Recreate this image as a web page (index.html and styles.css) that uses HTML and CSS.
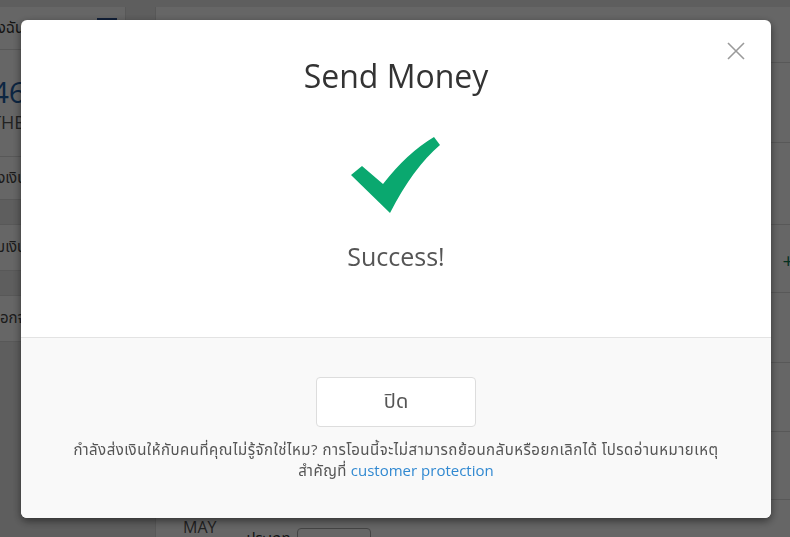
FILE: index.html
```html
<!DOCTYPE html>
<html lang="th">
<head>
<meta charset="utf-8">
<title>Send Money</title>
<link rel="stylesheet" href="styles.css">
</head>
<body>
<div class="page">
  <aside class="side">
    <div class="side-row side-head"><span class="side-title">บัญชีของฉัน</span><span class="side-icon"></span></div>
    <div class="side-balance">
      <div class="amount">12,346</div>
      <div class="currency">THB</div>
    </div>
    <div class="side-row">ส่งเงิน</div>
    <div class="side-gap"></div>
    <div class="side-row">รับเงิน</div>
    <div class="side-gap"></div>
    <div class="side-row">ถอนเงินออกจากบัญชี</div>
  </aside>
  <main class="main">
    <div class="main-row r1"></div>
    <div class="main-row r2"></div>
    <div class="main-row r3"></div>
    <div class="main-row r4"><span class="plus">+</span></div>
    <div class="main-row r5"></div>
    <div class="main-row r6"></div>
    <div class="main-row r7"></div>
    <div class="main-row r8">
      <div class="date">MAY</div>
      <div class="type">ประเภท <span class="select"></span></div>
    </div>
  </main>
</div>

<div class="overlay"></div>

<div class="modal" role="dialog">
  <button class="close" aria-label="Close">
    <svg width="18" height="18" viewBox="0 0 18 18"><path d="M1 1 L17 17 M17 1 L1 17" stroke="#9a9a9a" stroke-width="1.6" fill="none"/></svg>
  </button>
  <div class="modal-body">
    <h1 class="title">Send Money</h1>
    <svg class="check" width="92" height="80" viewBox="0 0 92 80">
      <path d="M1 39 L12 30 L33 48 Q57 17 84 1 L90 9 Q63 32 40 77 Z" fill="#0aa86f"/>
    </svg>
    <p class="success">Success!</p>
  </div>
  <div class="modal-foot">
    <button class="btn">ปิด</button>
    <p class="note"><span class="th">กำลังส่งเงินให้กับคนที่คุณไม่รู้จักใช่ไหม? การโอนนี้จะไม่สามารถย้อนกลับหรือยกเลิกได้ โปรดอ่านหมายเหตุ</span><br><span class="th">สำคัญที่</span> <a href="#">customer protection</a></p>
  </div>
</div>
</body>
</html>
```
FILE: styles.css
```css
* { box-sizing: border-box; }
html, body { margin: 0; padding: 0; }
body {
  width: 790px;
  height: 537px;
  overflow: hidden;
  background: #ebebeb;
  font-family: "Open Sans", "Noto Sans Thai", "Noto Sans", sans-serif;
  color: #333;
}
.page {
  display: flex;
  gap: 29px;
  padding-top: 7px;
  height: 537px;
}
.side {
  width: 236px;
  margin-left: -110px;
  background: #fff;
  border-right: 1px solid #ddd;
  align-self: flex-start;
}
.side-row {
  height: 43px;
  border-bottom: 1px solid #ddd;
  display: flex;
  align-items: center;
  justify-content: center;
  font-size: 15px;
  color: #444;
}
.side-head { justify-content: space-between; padding: 0 8px 0 60px; }
.side-title { font-size: 15px; color: #333; }
.side-icon { width: 20px; height: 11px; background: #2b4e8c; margin-top: -10px; }
.side-balance {
  height: 107px;
  border-bottom: 1px solid #ddd;
  text-align: right;
  padding: 24px 99px 0 0;
}
.amount { font-size: 30px; color: #1f5fa6; line-height: 36px; }
.currency { font-size: 18px; color: #555; }
.side-gap { height: 25px; background: #ebebeb; border-bottom: 1px solid #ddd; }
.side-row:nth-child(5), .side-row:nth-child(7) { height: 46px; }
.main {
  flex: 1;
  background: #fff;
  border-left: 1px solid #ddd;
}
.main-row { border-bottom: 1px solid #ddd; position: relative; }
.r1 { height: 56px; }
.r2 { height: 80px; }
.r3 { height: 82px; }
.r4 { height: 68px; }
.r5 { height: 70px; }
.r6 { height: 69px; }
.r7 { height: 68px; }
.r8 { height: 60px; display: flex; gap: 30px; padding: 18px 0 0 27px; }
.plus { position: absolute; right: -4px; top: 22px; color: #0a7a50; font-size: 20px; }
.date { font-size: 16px; color: #555; line-height: 18px; text-align: center; }
.type { font-size: 15px; color: #333; padding-top: 10px; display: flex; gap: 6px; }
.select { width: 74px; height: 26px; border: 1px solid #aaa; border-radius: 4px; display: inline-block; }

.overlay {
  position: fixed;
  inset: 0;
  background: rgba(0, 0, 0, 0.6);
}
.modal {
  position: fixed;
  left: 21px;
  top: 20px;
  width: 750px;
  height: 498px;
  background: #fff;
  border-radius: 6px;
  overflow: hidden;
  display: flex;
  flex-direction: column;
  box-shadow: 0 3px 9px rgba(0,0,0,0.5);
}
.close {
  position: absolute;
  right: 26px;
  top: 22px;
  width: 18px;
  height: 18px;
  padding: 0;
  border: 0;
  background: none;
}
.close svg { display: block; }
.modal-body {
  height: 318px;
  display: flex;
  flex-direction: column;
  align-items: center;
  padding-top: 34px;
  border-bottom: 1px solid #e3e3e3;
}
.title {
  margin: 0;
  font-size: 32px;
  font-weight: 400;
  line-height: 44px;
  color: #333;
}
.check { margin-top: 38px; display: block; }
.success {
  margin: 24px 0 0;
  font-size: 25px;
  line-height: 32px;
  color: #555;
}
.modal-foot {
  flex: 1;
  background: #f9f9f9;
  display: flex;
  flex-direction: column;
  align-items: center;
  padding-top: 39px;
}
.btn {
  width: 160px;
  height: 50px;
  background: #fff;
  border: 1px solid #ddd;
  border-radius: 4px;
  font-family: "Open Sans", "Noto Sans Thai", "Noto Sans", sans-serif;
  font-size: 20px;
  color: #555;
}
.note {
  margin: 12px 0 0;
  text-align: center;
  font-size: 15px;
  line-height: 21px;
  color: #555;
}
.note .th { letter-spacing: 0.5px; }
.note a { color: #3189d1; text-decoration: none; }
```
